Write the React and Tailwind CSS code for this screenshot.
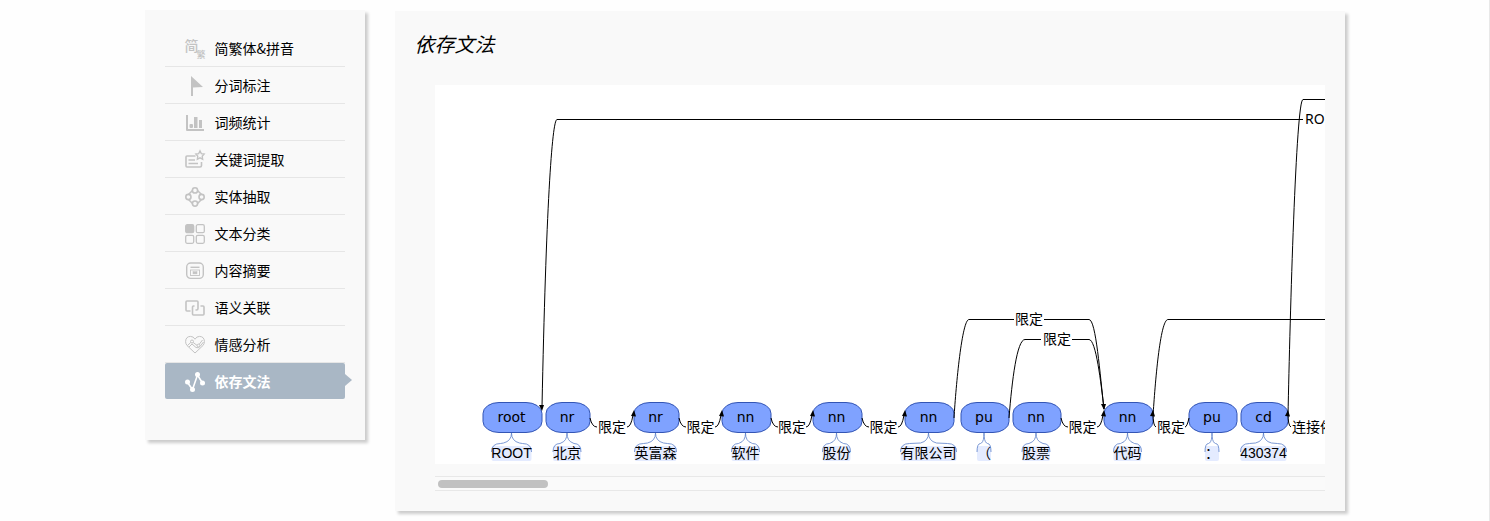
import React from "react";

const stroke = { fill: "none", stroke: "currentColor", strokeWidth: 1.6 };

const icons = {
  convert: (
    <g fill="currentColor" className="font-medium">
      <text x="-0.500" y="12" fontSize="14">简</text>
      <text x="11.500" y="19" fontSize="9">繁</text>
    </g>
  ),
  flag: <path fill="currentColor" d="M6 0 L18 11 L8 11.5 V20 H6 Z" />,
  bars: (
    <g fill="currentColor">
      <path d="M1 2 H3 V16 H19 V18 H2 Q1 18 1 17 Z" />
      <rect x="4.500" y="11" width="3.500" height="4" rx="1" />
      <rect x="9" y="4" width="3.500" height="11" />
      <rect x="14" y="7" width="3" height="8" />
    </g>
  ),
  keyword: (
    <g {...stroke}>
      <path d="M10.500 6 H2 Q1 6 1 7 V16 Q1 17 2 17 H15 Q16.500 17 16.500 15.500 V12" />
      <path d="M3.500 10 H10 M3.500 13.500 H13" />
      <path strokeWidth="1.3" d="M15 0.800 L16.300 3.600 L19.200 4 L17.200 6.200 L17.700 9.200 L15 7.800 L12.300 9.200 L12.800 6.200 L10.800 4 L13.700 3.600 Z" />
    </g>
  ),
  entity: (
    <g {...stroke}>
      <circle cx="10" cy="3.400" r="2.600" />
      <circle cx="3.400" cy="10" r="2.600" />
      <circle cx="16.600" cy="10" r="2.600" />
      <circle cx="10" cy="16.600" r="2.600" />
      <path d="M7.500 3.500 L3.500 7.500 M12.500 3.500 L16.500 7.500 M7.500 16.500 L3.500 12.500 M12.500 16.500 L16.500 12.500" />
    </g>
  ),
  grid: (
    <g {...stroke} strokeWidth="1.300">
      <rect x="0.700" y="0.700" width="8" height="8" rx="1.500" fill="currentColor" />
      <rect x="11.300" y="0.700" width="8" height="8" rx="1.500" />
      <rect x="0.700" y="11.300" width="8" height="8" rx="1.500" />
      <rect x="11.300" y="11.300" width="8" height="8" rx="1.500" />
    </g>
  ),
  summary: (
    <g {...stroke} strokeWidth="1.400">
      <rect x="1.700" y="2" width="16.600" height="15.400" rx="4" />
      <path d="M5.500 6.300 H14.500" />
      <rect x="5.500" y="9" width="9" height="5.500" strokeWidth="0.900" />
      <rect x="8" y="10.700" width="4" height="2.200" fill="currentColor" strokeWidth="0.500" />
    </g>
  ),
  link: (
    <g {...stroke}>
      <path d="M5.500 13 H2 Q1 13 1 12 V4 Q1 3 2 3 H12 Q13 3 13 4 V10.500 Q13 12 11.500 12 H10.500" />
      <path d="M9.500 8 H8.500 Q7.500 8 7.500 9 V16 Q7.500 17 8.500 17 H18 Q19 17 19 16 V9 Q19 8 18 8 H15.500" />
    </g>
  ),
  heart: (
    <g {...stroke} strokeWidth="1">
      <path d="M10 18 L2 10.500 Q0.600 8.800 0.600 6.500 Q0.800 1.500 5.500 1.400 Q8.500 1.400 10 4.200 Q11.500 1.400 14.500 1.400 Q19.200 1.500 19.400 6.500 Q19.400 8.800 18 10.500 Z" />
      <circle cx="7" cy="6.500" r="1.500" />
      <circle cx="13.500" cy="10.500" r="1.400" />
      <path d="M2.500 10.500 L5.700 7.500 M8.200 7.500 L12.200 10.500 M4 12 L7 9 L11 12.500 Q13.500 13.500 15 11.500 L18.500 7 M14.300 9.200 L17.500 5" />
    </g>
  ),
  graph: (
    <g fill="currentColor">
      <path {...stroke} d="M2.500 10.500 L7.500 17.500 L12.500 3 L17.500 11" />
      <circle cx="2.500" cy="10" r="2.500" />
      <circle cx="7.500" cy="17.500" r="2.500" />
      <circle cx="12.500" cy="2.500" r="2.500" />
      <circle cx="17.500" cy="11" r="2.500" />
    </g>
  ),
};

const menu = [
  { label: "简繁体&拼音", icon: "convert" },
  { label: "分词标注", icon: "flag" },
  { label: "词频统计", icon: "bars" },
  { label: "关键词提取", icon: "keyword" },
  { label: "实体抽取", icon: "entity" },
  { label: "文本分类", icon: "grid" },
  { label: "内容摘要", icon: "summary" },
  { label: "语义关联", icon: "link" },
  { label: "情感分析", icon: "heart" },
  { label: "依存文法", icon: "graph", active: true },
];

function MenuItem({ label, icon, active }) {
  return (
    <li
      className={
        active
          ? "relative h-9 rounded-xs bg-[#a9b7c5] text-white font-bold"
          : "h-[37px] border-b border-[#e6e6e6] text-black"
      }
    >
      <a
        href="#"
        aria-current={active ? "page" : undefined}
        className="flex h-full items-center gap-2.5 pl-5 text-sm"
      >
        <svg
          viewBox="0 0 20 20"
          aria-hidden="true"
          className={
            active
              ? "mt-0.5 size-5 shrink-0 text-white"
              : "mt-0.5 size-5 shrink-0 overflow-visible text-[#c3c3c3]"
          }
        >
          {icons[icon]}
        </svg>
        {label}
      </a>
      {active && (
        <svg viewBox="0 0 7 12" aria-hidden="true" className="absolute left-full top-[11px] h-3 w-[7px]">
          <path d="M0 0 L7 6 L0 12 Z" fill="#a9b7c5" />
        </svg>
      )}
    </li>
  );
}

const nodes = [
  { x: 48, w: 59, tag: "root", word: "ROOT", half: 20 },
  { x: 111, w: 44, tag: "nr", word: "北京", half: 14 },
  { x: 199, w: 45, tag: "nr", word: "英富森", half: 21 },
  { x: 287, w: 49, tag: "nn", word: "软件", half: 14 },
  { x: 378, w: 49, tag: "nn", word: "股份", half: 14 },
  { x: 470, w: 49, tag: "nn", word: "有限公司", half: 28 },
  { x: 526, w: 48, tag: "pu", word: "（", half: 7 },
  { x: 578, w: 48, tag: "nn", word: "股票", half: 14 },
  { x: 669, w: 49, tag: "nn", word: "代码", half: 14 },
  { x: 754, w: 48, tag: "pu", word: "：", half: 7 },
  { x: 806, w: 47, tag: "cd", word: "430374", half: 23 },
];

function Node({ x, w, tag, word, half }) {
  const c = x + w / 2 - 1;
  const l = c - half;
  const r = c + half;
  const inner = Math.min(9, half / 2);
  return (
    <g>
      <rect x={l} y="361" width={half * 2} height="15" rx="2" fill="#e4ebff" />
      <path
        d={`M${l} 367 Q${l} 358.500 ${l + inner} 358.500 L${c - inner + 1} 358 Q${c} 356 ${c} 348 Q${c} 356 ${c + inner - 1} 358 L${r - inner} 358.500 Q${r} 358.500 ${r} 367`}
        fill="none"
        stroke="#5b7fc9"
        strokeWidth="0.8"
      />
      <rect x={x} y="317.5" width={w} height="30" rx="16" ry="11" fill="#7fa2ff" stroke="#3355b4" />
      <text x={c} y="337" textAnchor="middle" className="font-['DejaVu_Sans',sans-serif]">{tag}</text>
      <text x={c} y="373" textAnchor="middle" className="font-['Liberation_Sans','Noto_Sans_CJK_SC',sans-serif]">
        {word}
      </text>
    </g>
  );
}

const arcs = [
  "M868 34.5 H122 C117 34.5 111 125 107 322",
  "M853 331 C855 230 861 14.500 868 14.5 H7000",
  "M519 333 C521 300 527 234.5 534 234.5 H579",
  "M609 234.5 H654 C661 234.5 665 290 669 324",
  "M574 333 C577 295 582 254.5 590 254.5 H606",
  "M637 254.5 H654 C661 254.5 666 298 669 324",
  "M718 331 C720 300 725 234.5 733 234.5 H7000",
  "M718 328 Q718 341 721 342",
  "M750 342 Q752 342 754 333",
  "M853 328 Q853 341 856 342",
];

const shortArcs = [
  [155, 199],
  [244, 287],
  [336, 378],
  [427, 470],
  [626, 669],
];

const labels = [
  [594, 239, "限定"],
  [622, 259, "限定"],
  [736, 347, "限定"],
];

const upHeads = [199, 287, 378, 470, 669, 718, 853];
const downHeads = [[107, 326], [669, 325]];

function DependencyGraph() {
  return (
    <svg
      role="img"
      aria-label="依存文法"
      className="block h-[379px] w-full text-sm font-['Noto_Sans','Noto_Sans_CJK_SC',sans-serif]"
    >
      {nodes.map((n) => (
        <Node key={n.x} {...n} />
      ))}
      <g fill="none" stroke="#000">
        {arcs.map((d) => (
          <path key={d} d={d} />
        ))}
        {shortArcs.map(([a, b]) => (
          <path key={a} d={`M${a} 333 Q${a + 2} 342 ${a + 7} 342 M${b - 7} 342 Q${b - 3} 342 ${b - 1} 330`} />
        ))}
      </g>
      <g fill="#000">
        {upHeads.map((x) => (
          <path key={x} d={`M${x} 325 L${x + 2} 331.500 L${x - 3} 331 Z`} />
        ))}
        {downHeads.map(([x, y]) => (
          <path key={x} d={`M${x} ${y} L${x + 2} ${y - 6} L${x - 3} ${y - 6} Z`} />
        ))}
        {shortArcs.map(([a, b]) => (
          <text key={a} x={(a + b) / 2} y="347" textAnchor="middle">限定</text>
        ))}
        {labels.map(([x, y, t]) => (
          <text key={x} x={x} y={y} textAnchor="middle">{t}</text>
        ))}
        <text x="857" y="347">连接依存</text>
        <text x="870" y="39">ROOT</text>
      </g>
    </svg>
  );
}

export default function App() {
  return (
    <div className="min-h-screen border-r border-[#e8e8e8] bg-[#fefefe] pt-2.5 pb-2.5 font-['Noto_Sans_CJK_SC',sans-serif]">
      <div className="mx-auto flex max-w-[1200px] items-start gap-[30px]">
        <nav className="w-[220px] shrink-0 bg-[#f9f9f9] px-5 pt-5 pb-[41px] shadow-[3px_3px_3px_#ccc]">
          <ul>
            {menu.map((m) => (
              <MenuItem key={m.label} {...m} />
            ))}
          </ul>
        </nav>
        <main className="mt-px min-w-0 flex-1 bg-[#f9f9f9] p-5 shadow-[3px_3px_3px_#ccc]">
          <h1 className="text-xl leading-[26px] italic text-black">依存文法</h1>
          <div className="mt-7 ml-5">
            <div className="overflow-hidden bg-white">
              <DependencyGraph />
            </div>
            <div className="mt-3 border-y border-[#e8e8e8] bg-[#fafafa] px-[3px] pt-[3px] pb-[2px]">
              <div className="h-2 w-1/8 rounded-full bg-[#c1c1c1]" />
            </div>
          </div>
        </main>
      </div>
    </div>
  );
}
